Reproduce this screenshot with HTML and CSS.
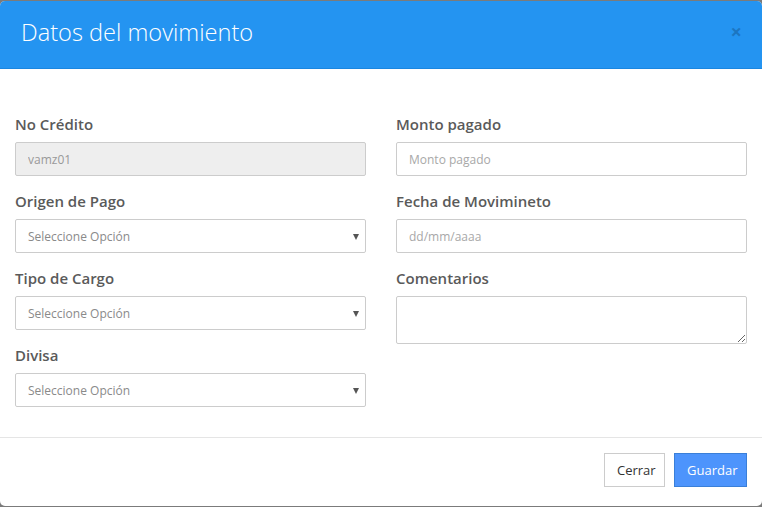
FILE: index.html
```html
<!DOCTYPE html>
<html lang="es">
<head>
<meta charset="utf-8">
<title>Datos del movimiento</title>
<link rel="stylesheet" href="styles.css">
</head>
<body>
<div class="modal">
  <div class="modal-header">
    <h4 class="modal-title">Datos del movimiento</h4>
    <button class="close" type="button">×</button>
  </div>
  <div class="modal-body">
    <div class="col">
      <div class="group">
        <label class="label">No Crédito</label>
        <input class="control" type="text" value="vamz01" disabled>
      </div>
      <div class="group">
        <label class="label">Origen de Pago</label>
        <div class="select-wrap"><select class="control"><option>Seleccione Opción</option></select></div>
      </div>
      <div class="group">
        <label class="label">Tipo de Cargo</label>
        <div class="select-wrap"><select class="control"><option>Seleccione Opción</option></select></div>
      </div>
      <div class="group">
        <label class="label">Divisa</label>
        <div class="select-wrap"><select class="control"><option>Seleccione Opción</option></select></div>
      </div>
    </div>
    <div class="col">
      <div class="group">
        <label class="label">Monto pagado</label>
        <input class="control" type="text" placeholder="Monto pagado">
      </div>
      <div class="group">
        <label class="label">Fecha de Movimineto</label>
        <input class="control" type="text" placeholder="dd/mm/aaaa">
      </div>
      <div class="group">
        <label class="label">Comentarios</label>
        <textarea class="control area"></textarea>
      </div>
    </div>
  </div>
  <div class="modal-footer">
    <button class="btn btn-default" type="button">Cerrar</button>
    <button class="btn btn-primary" type="button">Guardar</button>
  </div>
</div>
</body>
</html>
```

FILE: styles.css
```css
html, body {
  margin: 0;
  padding: 0;
  background: #7b7b7b;
  height: 100%;
  overflow: hidden;
}
body {
  font-family: "Open Sans", "Liberation Sans", sans-serif;
  padding-top: 1px;
  box-sizing: border-box;
}
.modal {
  background: #fff;
  border-radius: 5px;
  overflow: hidden;
  height: 505px;
  display: flex;
  flex-direction: column;
}
.modal-header {
  flex-shrink: 0;
  background: #2494f1;
  border-bottom: 1px solid #1a86e0;
  height: 67px;
  display: flex;
  align-items: center;
  justify-content: space-between;
  padding: 0 20px 0 21px;
}
.modal-title {
  margin: -3px 0 0;
  font-weight: 300;
  font-size: 23.6px;
  color: #fff;
  line-height: 1;
}
.close {
  background: none;
  border: 0;
  padding: 0;
  font-size: 20px;
  font-weight: 700;
  color: #000;
  opacity: 0.2;
  font-family: "Open Sans", sans-serif;
  line-height: 1;
  margin-top: -5px;
}
.modal-body {
  flex-shrink: 0;
  display: flex;
  gap: 30px;
  padding: 45px 15px 13px;
}
.col {
  flex: 1;
  display: flex;
  flex-direction: column;
}
.group {
  display: flex;
  flex-direction: column;
  margin-bottom: 15px;
}
.label {
  font-size: 15px;
  font-weight: 600;
  color: #5a5a5a;
  line-height: 20px;
  margin-bottom: 8px;
}
.control {
  box-sizing: border-box;
  width: 100%;
  height: 34px;
  border: 1px solid #ccc;
  border-radius: 2px;
  padding: 0 12px;
  font-family: "Open Sans", sans-serif;
  font-size: 12px;
  color: #999;
  background: #fff;
  outline: none;
  margin: 0;
}
.control::placeholder {
  color: #a8a8a8;
}
.control:disabled {
  background: #eee;
  color: #999;
}
.select-wrap {
  position: relative;
}
select.control {
  appearance: none;
  -webkit-appearance: none;
  color: #8a8a8a;
}
.select-wrap::after {
  content: "";
  position: absolute;
  right: 7px;
  top: 15px;
  border-left: 3.5px solid transparent;
  border-right: 3.5px solid transparent;
  border-top: 6px solid #555;
  pointer-events: none;
}
.area {
  height: 48px;
  resize: vertical;
  padding: 6px 12px;
}
.modal-footer {
  flex-shrink: 0;
  border-top: 1px solid #e5e5e5;
  display: flex;
  justify-content: flex-end;
  gap: 9px;
  padding: 15px 15px 0;
  margin-top: auto;
  height: 53px;
}
.btn {
  font-family: "Open Sans", sans-serif;
  font-size: 13px;
  height: 34px;
  padding: 0 12px;
  border-radius: 0;
  cursor: pointer;
}
.btn-default {
  background: #fff;
  border: 1px solid #ccc;
  color: #333;
  width: 61px;
}
.btn-primary {
  background: #4d94fc;
  border: 1px solid #3a7fd8;
  color: #fff;
  width: 73px;
}
```
